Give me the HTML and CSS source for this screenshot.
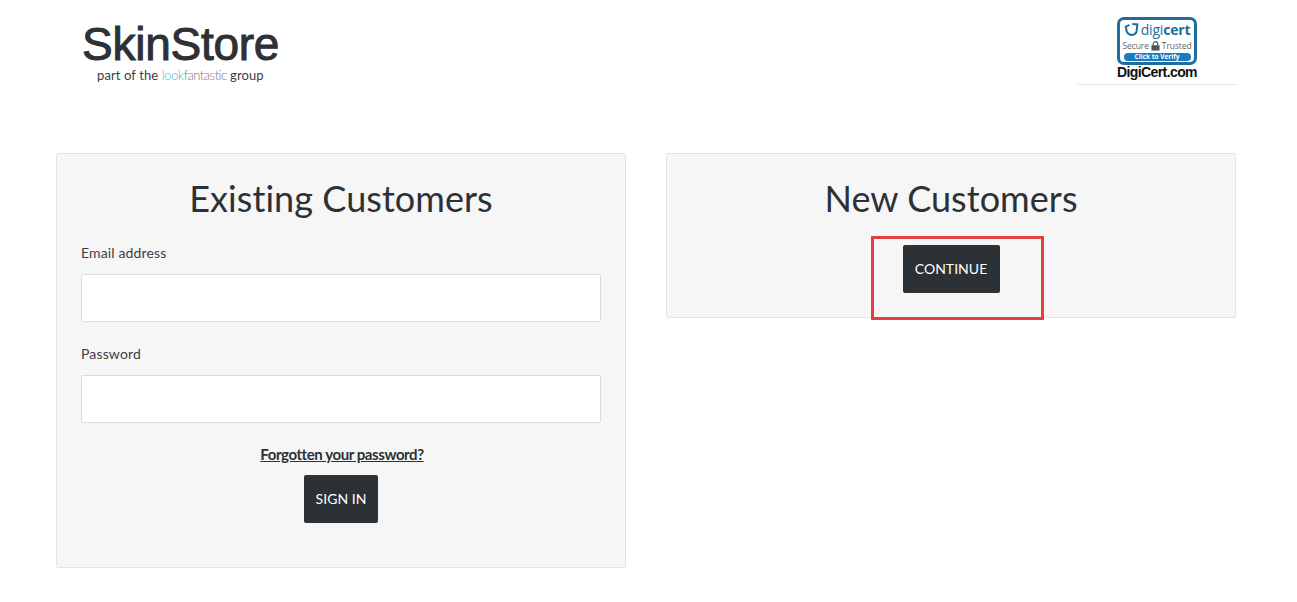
FILE: index.html
```html
<!DOCTYPE html>
<html lang="en">
<head>
    <meta charset="UTF-8">
    <meta name="viewport" content="width=device-width, initial-scale=1.0">
    <title>SkinStore - Login</title>
    <link rel="stylesheet" href="styles.css">
</head>
<body>
    <header class="site-header">
        <div class="logo">
            <div class="logo-name">SkinStore</div>
            <div class="logo-sub">part of the <span class="look">look</span><span class="fantastic">fantastic</span> group</div>
        </div>
        <div class="seal-wrap">
            <div class="seal">
                <div class="seal-brand">
                    <svg class="seal-icon" viewBox="0 0 18 18" width="15" height="15">
                        <path d="M10 2.5 L16 3 L15 12 A6.5 6.5 0 0 1 3.5 12 L2 6 L6.5 3.5" fill="none" stroke="#1f6d9c" stroke-width="2.4"/>
                    </svg>
                    <span class="digi">digi</span><span class="cert">cert</span>
                </div>
                <div class="seal-secure">
                    Secure
                    <svg viewBox="0 0 10 11" width="9" height="10">
                        <path d="M2.5 5V3.2a2.5 2.5 0 0 1 5 0V5" fill="none" stroke="#555" stroke-width="1.3"/>
                        <rect x="0.5" y="4.6" width="9" height="6" fill="#555"/>
                    </svg>
                    Trusted
                </div>
                <div class="seal-verify">Click to Verify</div>
            </div>
            <div class="seal-site">DigiCert.com</div>
        </div>
    </header>

    <main class="accounts">
        <section class="panel panel-login">
            <h1>Existing Customers</h1>
            <form>
                <div class="form-group">
                    <label for="email">Email address</label>
                    <input type="email" id="email">
                </div>
                <div class="form-group">
                    <label for="password">Password</label>
                    <input type="password" id="password">
                </div>
                <div class="form-actions">
                    <a href="#" class="forgot">Forgotten your password?</a>
                    <button type="button" class="btn">SIGN IN</button>
                </div>
            </form>
        </section>

        <section class="panel panel-new">
            <h1>New Customers</h1>
            <div class="form-actions">
                <button type="button" class="btn btn-marked">CONTINUE</button>
            </div>
        </section>
    </main>
</body>
</html>
```

FILE: styles.css
```css
* {
    margin: 0;
    padding: 0;
    box-sizing: border-box;
}

body {
    background: #fff;
    color: #2c3135;
    font-family: Lato, sans-serif;
    font-variant-ligatures: none;
    height: 602px;
    overflow: hidden;
}

.site-header {
    display: flex;
    justify-content: space-between;
    align-items: flex-start;
    height: 153px;
    padding: 17px 60px 0 82px;
}

.logo-name {
    font-family: "Liberation Sans", sans-serif;
    font-size: 46px;
    line-height: 46px;
    letter-spacing: -0.25px;
    -webkit-text-stroke: 1px #2c3135;
    color: #2c3135;
    margin-top: 4px;
}

.logo-sub {
    font-size: 13px;
    line-height: 16px;
    letter-spacing: 0.1px;
    color: #3a3e42;
    margin-left: 15px;
}

.look {
    color: #3fc4c9;
    font-weight: 300;
    letter-spacing: -0.4px;
}

.fantastic {
    color: #777;
    font-weight: 300;
    letter-spacing: -0.5px;
}

.seal-wrap {
    width: 160px;
    height: 68px;
    display: flex;
    flex-direction: column;
    align-items: center;
    border-bottom: 1px solid #e5e5e5;
}

.seal {
    width: 80px;
    height: 48px;
    border: 3px solid #1f6d9c;
    border-radius: 7px;
    background: #fff;
    display: flex;
    flex-direction: column;
    align-items: center;
    overflow: hidden;
}

.seal-brand {
    display: flex;
    align-items: center;
    height: 19px;
    font-family: "Open Sans", sans-serif;
    font-size: 14px;
    line-height: 19px;
    letter-spacing: -0.2px;
}

.seal-icon {
    margin-right: 2px;
}

.digi {
    color: #1f6d9c;
}

.cert {
    color: #1f6d9c;
    font-weight: 700;
}

.seal-secure {
    display: flex;
    align-items: center;
    gap: 2px;
    height: 13px;
    font-family: "Open Sans", sans-serif;
    font-size: 8.5px;
    letter-spacing: -0.1px;
    color: #666;
    white-space: nowrap;
}

.seal-verify {
    width: 67px;
    height: 8px;
    margin-top: 1px;
    border-radius: 4px;
    background: #1b7cc4;
    color: #fff;
    font-family: "Open Sans", sans-serif;
    font-size: 6.5px;
    font-weight: 700;
    line-height: 8px;
    text-align: center;
    white-space: nowrap;
}

.seal-site {
    font-family: "Liberation Sans", sans-serif;
    font-size: 14px;
    font-weight: 700;
    line-height: 14px;
    letter-spacing: -0.6px;
    color: #111;
}

.accounts {
    display: flex;
    align-items: flex-start;
    gap: 40px;
    padding-left: 56px;
}

.panel {
    width: 570px;
    padding: 24px;
    background: #f6f6f6;
    border: 1px solid #e3e3e3;
    border-radius: 2px;
}

.panel-login {
    height: 415px;
}

.panel-new {
    height: 165px;
}

h1 {
    font-size: 36px;
    font-weight: 400;
    line-height: 40px;
    letter-spacing: 0.06px;
    text-align: center;
    color: #2c3135;
}

.form-group {
    margin-top: 25px;
}

.form-group + .form-group {
    margin-top: 22px;
}

label {
    display: block;
    font-size: 14px;
    line-height: 20px;
    letter-spacing: 0.15px;
    color: #3b4045;
    margin-bottom: 11px;
}

input {
    display: block;
    width: 100%;
    height: 48px;
    padding: 0 12px;
    background: #fff;
    border: 1px solid #dcdcdc;
    border-radius: 2px;
}

.form-actions {
    display: flex;
    flex-direction: column;
    align-items: center;
}

.forgot {
    margin: 21px 0 11px 2px;
    font-size: 15px;
    font-weight: 700;
    line-height: 20px;
    letter-spacing: -0.42px;
    color: #2c3135;
}

.btn {
    height: 48px;
    padding: 0 12px 1px;
    background: #2c3135;
    color: #fff;
    border: none;
    border-radius: 2px;
    font-family: Lato, sans-serif;
    font-size: 14px;
    letter-spacing: 0.03px;
}

.panel-new .form-actions {
    margin-top: 27px;
}

/* red box drawn over the screenshot */
.btn-marked {
    position: relative;
    width: 97px;
}

.btn-marked::after {
    content: "";
    box-sizing: border-box;
    position: absolute;
    left: -32px;
    top: -9px;
    width: 173px;
    height: 84px;
    border: 3px solid #e04040;
}
```
